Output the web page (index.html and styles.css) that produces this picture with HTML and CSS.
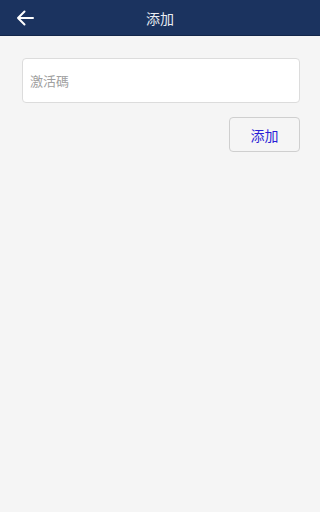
FILE: index.html
```html
<!DOCTYPE html>
<html lang="zh">
<head>
<meta charset="utf-8">
<title>添加</title>
<link rel="stylesheet" href="styles.css">
</head>
<body>
<header class="bar">
  <span class="back">
    <svg width="18" height="16" viewBox="0 0 18 16"><path d="M17 8H2M8.5 1.5L2 8l6.5 6.5" fill="none" stroke="#fff" stroke-width="2" stroke-linecap="round" stroke-linejoin="round"/></svg>
  </span>
  <h1 class="title">添加</h1>
</header>
<main class="content">
  <input class="code" type="text" placeholder="激活碼">
  <div class="actions">
    <button class="add">添加</button>
  </div>
</main>
</body>
</html>
```

FILE: styles.css
```css
html, body {
  margin: 0;
  padding: 0;
  background: #f5f5f5;
  font-family: "Noto Sans CJK SC", "Noto Sans", sans-serif;
}
.bar {
  height: 36px;
  background: #1b335f;
  border-bottom: 1px solid #13264a;
  box-sizing: border-box;
  display: flex;
  align-items: center;
  justify-content: center;
  position: relative;
}
.back {
  position: absolute;
  left: 16px;
  top: 10px;
  display: flex;
}
.title {
  margin: 0;
  font-size: 14px;
  font-weight: normal;
  color: #e8ecf2;
}
.content {
  padding: 22px 20px 0 22px;
  display: flex;
  flex-direction: column;
}
.code {
  height: 45px;
  box-sizing: border-box;
  border: 1px solid #dcdcdc;
  border-radius: 4px;
  background: #fff;
  padding: 0 7px;
  font-size: 13px;
  font-family: inherit;
  color: #333;
  outline: none;
}
.code::placeholder {
  color: #a0a0a0;
}
.actions {
  display: flex;
  justify-content: flex-end;
  margin-top: 14px;
}
.add {
  width: 71px;
  height: 35px;
  border: 1px solid #cfcfcf;
  border-radius: 4px;
  background: #f5f5f5;
  color: #2a1fd6;
  font-size: 14px;
  font-family: inherit;
  padding: 0;
}
```
